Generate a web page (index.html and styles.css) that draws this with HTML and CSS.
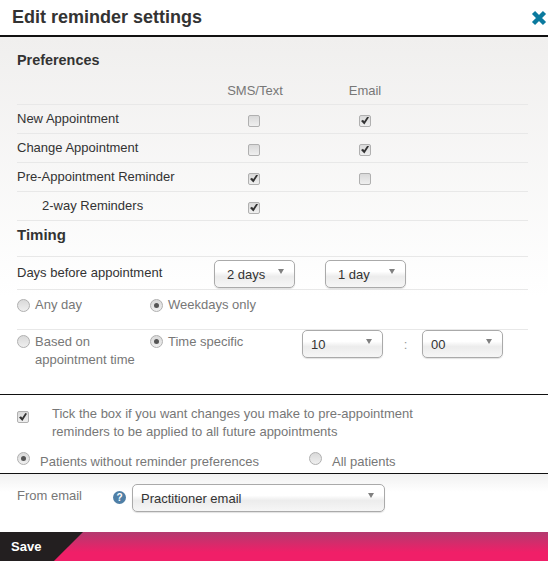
FILE: index.html
```html
<!DOCTYPE html>
<html lang="en">

<head>
    <meta charset="UTF-8">
    <meta name="viewport" content="width=device-width, initial-scale=1.0">
    <title>Edit reminder settings</title>
    <link rel="stylesheet" href="styles.css">
</head>

<body>
    <div class="modal">
        <div class="modal-header">
            <h1>Edit reminder settings</h1>
            <button class="close" aria-label="Close">
                <svg width="16" height="16" viewBox="0 0 16 16">
                    <path d="M2.5 2.5L13.5 13.5M13.5 2.5L2.5 13.5" stroke="#0b7a9e" stroke-width="4.4" fill="none" />
                </svg>
            </button>
        </div>

        <div class="settings">
            <h2 class="pref-title">Preferences</h2>
            <div class="pref-head">
                <span></span>
                <span class="col sms">SMS/Text</span>
                <span class="col">Email</span>
            </div>
            <div class="pref-row">
                <label>New Appointment</label>
                <span class="col"><input type="checkbox"></span>
                <span class="col"><input type="checkbox" checked></span>
            </div>
            <div class="pref-row">
                <label>Change Appointment</label>
                <span class="col"><input type="checkbox"></span>
                <span class="col"><input type="checkbox" checked></span>
            </div>
            <div class="pref-row">
                <label>Pre-Appointment Reminder</label>
                <span class="col"><input type="checkbox" checked></span>
                <span class="col"><input type="checkbox"></span>
            </div>
            <div class="pref-row">
                <label class="indent">2-way Reminders</label>
                <span class="col"><input type="checkbox" checked></span>
                <span></span>
            </div>

            <h2 class="timing-title">Timing</h2>
            <div class="days-row">
                <label>Days before appointment</label>
                <div class="select days-first"><select><option>2 days</option></select></div>
                <div class="select days-second"><select><option>1 day</option></select></div>
            </div>
            <div class="radio-row any-row">
                <label class="radio first"><input type="radio" name="day"> Any day</label>
                <label class="radio"><input type="radio" name="day" checked> Weekdays only</label>
            </div>
            <div class="radio-row time-row">
                <label class="radio first"><input type="radio" name="time"> <span>Based on<br>appointment time</span></label>
                <label class="radio second"><input type="radio" name="time" checked> Time specific</label>
                <div class="select time-select"><select class="left"><option>10</option></select></div>
                <span class="colon">:</span>
                <div class="select time-select"><select class="left"><option>00</option></select></div>
            </div>
        </div>

        <div class="apply">
            <div class="apply-tick">
                <input type="checkbox" checked>
                <p>Tick the box if you want changes you make to pre-appointment<br>reminders to be applied to all future appointments</p>
            </div>
            <div class="apply-who">
                <label class="who who-first"><input type="radio" name="who" checked> Patients without reminder preferences</label>
                <label class="who"><input type="radio" name="who"> All patients</label>
            </div>
        </div>

        <div class="from">
            <label class="from-label">From email</label>
            <span class="help">?</span>
            <div class="select from-select"><select class="left"><option>Practitioner email</option></select></div>
        </div>

        <div class="modal-footer">
            <button class="save">Save</button>
        </div>
    </div>
</body>

</html>
```

FILE: styles.css
```css
/* styles.css */
* {
    box-sizing: border-box;
}

body {
    margin: 0;
    font-family: "Liberation Sans", Arial, sans-serif;
    font-size: 13px;
    color: #333;
    background: #fff;
}

.modal {
    width: 548px;
    height: 561px;
    overflow: hidden;
}

.modal-header {
    height: 37px;
    padding: 0 1px 0 12px;
    display: flex;
    justify-content: space-between;
    align-items: center;
    border-bottom: 2px solid #111;
}

.modal-header h1 {
    margin: 0;
    font-size: 18px;
    color: #333;
}

.close {
    border: none;
    background: none;
    padding: 0;
    height: 16px;
    line-height: 0;
}

.settings {
    height: 358px;
    padding: 0 20px 0 17px;
    background: linear-gradient(#f0efee, #fff 260px);
    border-bottom: 1px solid #111;
}

h2 {
    margin: 0;
    font-size: 14.4px;
    color: #333;
}

.pref-title {
    padding-top: 15px;
    height: 46px;
}

.pref-head,
.pref-row {
    display: grid;
    grid-template-columns: 166px 80px 80px;
    column-gap: 31px;
    height: 29px;
    border-bottom: 1px solid #e8e8e8;
}

.pref-head {
    height: 22px;
    color: #777;
}

.pref-row {
    padding-top: 6px;
}

.col {
    text-align: center;
}

.sms {
    padding-left: 2px;
}

.indent {
    padding-left: 25px;
}

.timing-title {
    height: 36px;
    padding-top: 5px;
    font-size: 15px;
    border-bottom: 1px solid #e8e8e8;
}

input[type="checkbox"],
input[type="radio"] {
    appearance: none;
    margin: 0;
    position: relative;
    background: linear-gradient(#d9d9d9, #efefef);
    border: 1px solid #b0b0b0;
    vertical-align: middle;
}

input[type="checkbox"] {
    width: 12px;
    height: 12px;
    flex: none;
    border-radius: 2px;
    top: 1px;
}

input[type="radio"] {
    width: 13px;
    height: 13px;
    flex: none;
    border-radius: 50%;
}

input[type="checkbox"]:checked::after {
    content: "";
    position: absolute;
    left: 1px;
    top: 1px;
    width: 8px;
    height: 8px;
    background: #333;
    clip-path: polygon(0 55%, 25% 40%, 40% 60%, 80% 0, 100% 10%, 42% 100%);
}

input[type="radio"]:checked::after {
    content: "";
    position: absolute;
    left: 3px;
    top: 3px;
    width: 5px;
    height: 5px;
    border-radius: 50%;
    background: #555;
}

.days-row {
    display: flex;
    height: 33px;
    border-bottom: 1px solid #e8e8e8;
    padding-top: 3px;
}

.days-row label {
    width: 197px;
    padding-top: 5px;
}

.days-first {
    margin-right: 30px;
}

.select {
    position: relative;
    width: 81px;
    height: 28px;
}

.select::after {
    content: "";
    position: absolute;
    right: 11px;
    top: 9px;
    border-left: 3.5px solid transparent;
    border-right: 3.5px solid transparent;
    border-top: 5px solid #808080;
    pointer-events: none;
}

select {
    appearance: none;
    width: 100%;
    height: 100%;
    padding: 1px 20px 0 12px;
    border: 1px solid #aaa;
    border-radius: 5px;
    background: linear-gradient(#fff, #fff 40%, #ececec 60%, #f6f6f6);
    box-shadow: 0 1px 1px rgba(0, 0, 0, 0.12);
    font-family: inherit;
    font-size: 13px;
    color: #333;
}

select.left {
    padding-left: 8px;
}

.radio-row {
    display: flex;
    color: #777;
    border-bottom: 1px solid #e8e8e8;
}

.any-row {
    height: 40px;
    padding-top: 7px;
}

.time-row {
    border-bottom: none;
    padding-top: 3px;
    line-height: 18px;
}

.radio {
    display: flex;
    gap: 5px;
    align-items: flex-start;
}

.radio input {
    margin-top: 2px;
}

.radio.first {
    width: 133px;
}

.radio.second {
    width: 152px;
}

.time-row .select {
    margin-top: -3px;
}

.colon {
    width: 39px;
    padding: 3px 0 0 6px;
    text-align: center;
    color: #999;
}

.apply {
    height: 79px;
    padding: 10px 17px 0;
    border-bottom: 1px solid #111;
    color: #777;
}

.apply-tick {
    display: flex;
    gap: 23px;
    line-height: 18px;
}

.apply-tick p {
    margin: 0;
}

.apply-tick input {
    margin-top: 5px;
}

.apply-who {
    display: flex;
    margin-top: 13px;
}

.who {
    display: flex;
    gap: 10px;
}

.who input {
    margin-top: -2px;
}

.who-first {
    width: 292px;
}

.from {
    height: 58px;
    padding: 10px 0 0 17px;
    display: flex;
    background: linear-gradient(#f1f1f1, #fff 18px);
    color: #777;
}

.from-label {
    width: 96px;
    padding-top: 4px;
}

.help {
    width: 13px;
    height: 13px;
    margin: 7px 6px 0 0;
    border-radius: 50%;
    background: #4f7fa6;
    color: #fff;
    font-size: 10px;
    font-weight: bold;
    line-height: 13px;
    text-align: center;
}

.from-select {
    width: 253px;
}

.modal-footer {
    height: 29px;
    background: linear-gradient(#b33a6f, #f01f68 70%);
}

.save {
    display: block;
    width: 83px;
    height: 29px;
    border: none;
    padding: 0 0 0 11px;
    background: #231f20;
    clip-path: polygon(0 0, 100% 0, 65% 100%, 0 100%);
    color: #fff;
    font-family: inherit;
    font-size: 13px;
    font-weight: bold;
    text-align: left;
}
```
